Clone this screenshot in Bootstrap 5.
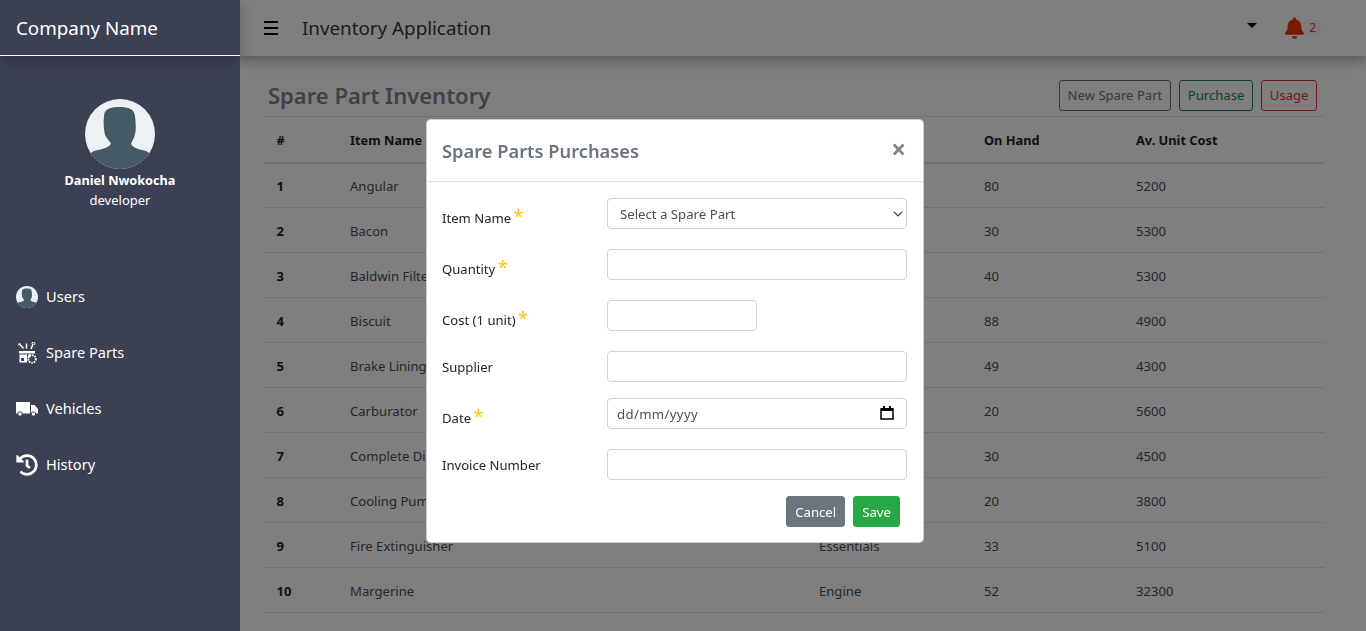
<!DOCTYPE html>
<html lang="en">
<head>
<meta charset="utf-8">
<title>Inventory Application</title>
<link href="https://cdn.jsdelivr.net/npm/bootstrap@5.3.0/dist/css/bootstrap.min.css" rel="stylesheet">
<style>
html,body{height:100%;overflow:hidden}
body{font-family:"Noto Sans","Open Sans",sans-serif;font-size:13.2px;color:#212529;background:#fff}
.shell{height:631px}
.side{width:240px;flex:none;background:#3c4053;color:#fff;z-index:1060;position:relative}
.brand{height:56px;border-bottom:1px solid #fff;font-size:18.8px;padding:2px 16px 0;box-shadow:0 4px 12px rgba(0,0,0,.25)}
.avatar{width:70px;height:70px;display:block;margin:43px auto 0}
.uname{font-weight:700;font-size:12.7px;margin-top:1px;line-height:20px}
.urole{line-height:20px;font-size:13px}
.menu{margin-top:59px}
.menu a{color:#fff;height:56px;padding:0 16px;font-size:14.6px;gap:8px;text-decoration:none}
.menu svg{width:22px;height:22px;flex:none}
.topbar{height:56px;padding:0 45px 0 24px;box-shadow:0 4px 12px rgba(0,0,0,.35);background:#fff}
.apptitle{font-size:18.8px;margin-left:24px;color:#343a40}
.burger{width:14px;height:14px}
.caret{width:0;height:0;border:5px solid transparent;border-top-color:#000;border-bottom:0;margin-right:28px;margin-top:-6px}
.bell{width:19px;height:22px}
.bellnum{background:#f8f9fa;color:#dc3545;font-size:12px;padding:1px 5px;border-radius:4px;line-height:14px}
.work{padding:24px 41px 0 24px}
.pagetitle{font-size:22px;font-weight:600;color:#7d858c;margin:0 0 0 4px;line-height:31px}
.tools{gap:8px;margin-right:8px}
.tools .btn{font-size:13.1px;padding:0 7.5px;height:31px;line-height:29px;border-radius:3px}
.tools .btn-outline-success{padding:0 8px}
.tools .btn-outline-secondary{margin-left:-1px}
.grid{table-layout:fixed;width:1061px;margin:5px 0 0;border-top:1px solid #dee2e6}
.grid th,.grid td{padding:4px 0 0 12.5px;height:45px;vertical-align:middle;font-size:13.1px;color:#495057;border-bottom:1px solid #dee2e6;box-shadow:none}
.grid thead th{border-bottom:2px solid #dee2e6;height:46px;padding-top:2px;font-weight:700;font-size:12.8px;color:#212529}
.grid tbody td:first-child{font-weight:700;color:#212529}
.veil{position:fixed;inset:0;background:rgba(0,0,0,.5);z-index:1050}
.dialog{position:fixed;left:426px;top:119px;width:498px;z-index:1055;border-radius:5px;border:1px solid rgba(0,0,0,.2);background:#fff}
.dialog .modal-header{height:62px;padding:1px 16px 0 15px;border-bottom:1px solid #dee2e6}
.dlgtitle{font-size:18.3px;font-weight:600;color:#6c757d;margin:0}
.shut{background:none;border:0;color:#7f868c;font-size:26px;line-height:1;padding:0 0 4px;font-weight:700;margin-right:1px}
.dialog .modal-body{padding:16px 16px 15px 15px}
.frow{margin-bottom:16px;display:flex;align-items:flex-start}
.frow.req{height:35px}
.frow label{width:165px;flex:none;padding-top:7px;font-size:13.1px;line-height:18px}
.frow.req label{padding-top:11px}
.star{color:#ffc107;font-size:18px;line-height:10px;margin-left:-1px;vertical-align:0}
.field{height:31px;width:300px;font-size:13.2px;color:#495057;border:1px solid #ced4da;border-radius:4px;padding:1px 12px 0;box-shadow:none;background-color:#fff}
.field.short{width:150px}
select.field{padding-top:2px;background-position:right 2px center;background-size:12px 10px}
.dateholder{width:300px;position:relative}
.dateholder .field{padding-left:9px;letter-spacing:.35px}
.dateholder .field::placeholder{color:#495057;opacity:1}
.dateholder svg{position:absolute;right:13px;top:8px;width:14px;height:14px}
.acts{gap:8px;margin:0 7px 0 0}
.acts .btn{font-size:13.2px;height:31px;padding:0 8px;line-height:31px;border-radius:3px}
.btn-save{background:#28a745;border-color:#28a745;color:#fff}
</style>
</head>
<body>
<div class="d-flex shell">
  <aside class="side">
    <div class="brand d-flex align-items-center">Company Name</div>
    <svg class="avatar" viewBox="0 0 70 70"><defs><clipPath id="av"><circle cx="35" cy="35" r="35"/></clipPath></defs><circle cx="35" cy="35" r="35" fill="#eef1f4"/><path clip-path="url(#av)" fill="#455a64" d="M19 17c0-8 8-9 16-9s15 2 15 10c1 7 1 14 0 17-1 5-3 7-4 10 2 4 7 5 15 7 2 1 3 2 4 3v15H5V55c1-1 2-2 4-3 8-2 14-3 17-7-1-3-4-5-6-9-1-5-2-12-1-19z"/></svg>
    <div class="uname text-center">Daniel Nwokocha</div>
    <div class="urole text-center">developer</div>
    <nav class="menu d-flex flex-column">
      <a class="d-flex align-items-center" href="#"><svg viewBox="0 0 70 70"><defs><clipPath id="av2"><circle cx="35" cy="35" r="35"/></clipPath></defs><circle cx="35" cy="35" r="35" fill="#eef1f4"/><path clip-path="url(#av2)" fill="#455a64" d="M19 17c0-8 8-9 16-9s15 2 15 10c1 7 1 14 0 17-1 5-3 7-4 10 2 4 7 5 15 7 2 1 3 2 4 3v15H5V55c1-1 2-2 4-3 8-2 14-3 17-7-1-3-4-5-6-9-1-5-2-12-1-19z"/></svg>Users</a>
      <a class="d-flex align-items-center" href="#"><svg viewBox="0 0 22 22"><path fill="#fff" d="M3 9h16v2.500H3zM3.500 12.500h7.500v8H3.500zM12 12.500h3.500l-1 2-2.500 2z"/><path fill="#3c4053" d="M5 16h3v3H5z"/><circle cx="16" cy="17" r="3.800" fill="none" stroke="#fff" stroke-width="2" stroke-dasharray="1.500 1"/><path stroke="#fff" stroke-width="1.500" fill="none" d="M3 1.500l4.500 5M10.500 1.500v5M17 2l-2 5"/><path stroke="#fff" fill="none" d="M2 3.500l2-2M16 2a1.500 1.500 0 1 1 2 1"/></svg>Spare Parts</a>
      <a class="d-flex align-items-center" href="#"><svg viewBox="0 0 22 22"><path fill="#fff" d="M0 4h14v11.500H0zM15 7h3.500l3.500 4v4.500h-7z"/><circle cx="4" cy="16" r="2.200" fill="#fff" stroke="#3c4053"/><circle cx="17.500" cy="16" r="2.200" fill="#fff" stroke="#3c4053"/></svg>Vehicles</a>
      <a class="d-flex align-items-center" href="#"><svg viewBox="0 0 512 512"><path fill="#fff" d="M504 255.531c.253 136.64-111.18 248.372-247.82 248.468-59.015.042-113.223-20.53-155.822-54.911-11.077-8.94-11.905-25.541-1.839-35.607l11.267-11.267c8.609-8.609 22.353-9.551 31.891-1.984C173.062 425.135 212.781 440 256 440c101.705 0 184-82.311 184-184 0-101.705-82.311-184-184-184-48.814 0-93.149 18.969-126.068 49.932l50.754 50.754c10.08 10.08 2.941 27.314-11.313 27.314H24c-8.837 0-16-7.163-16-16V38.627c0-14.254 17.234-21.393 27.314-11.314l49.372 49.372C129.209 34.136 189.552 8 256 8c136.81 0 247.747 110.78 248 247.531zm-180.912 78.784l9.823-12.63c8.138-10.463 6.253-25.542-4.21-33.679L288 256.349V152c0-13.255-10.745-24-24-24h-16c-13.255 0-24 10.745-24 24v135.651l65.409 50.874c10.463 8.137 25.541 6.253 33.679-4.21z"/></svg>History</a>
    </nav>
  </aside>
  <div class="flex-grow-1">
    <header class="topbar d-flex align-items-center">
      <svg class="burger" viewBox="0 0 14 14"><path stroke="#000" stroke-width="2" d="M0 1h14M0 7h14M0 13h14"/></svg>
      <span class="apptitle">Inventory Application</span>
      <span class="ms-auto caret"></span>
      <svg class="bell" viewBox="0 0 448 512"><path fill="#f53100" d="M224 512c35.320 0 63.970-28.650 63.970-64H160.030c0 35.350 28.650 64 63.970 64zm215.390-149.710c-19.320-20.760-55.470-51.990-55.470-154.290 0-77.700-54.480-139.900-127.940-155.160V32c0-17.670-14.320-32-31.980-32s-31.980 14.330-31.980 32v20.840C118.560 68.100 64.080 130.300 64.080 208c0 102.300-36.150 133.530-55.470 154.290-6 6.450-8.660 14.160-8.610 21.710.11 16.400 12.980 32 32.100 32h383.800c19.120 0 32-15.600 32.100-32 .05-7.550-2.610-15.270-8.610-21.710z"/></svg>
      <span class="bellnum">2</span>
    </header>
    <main class="work">
      <div class="d-flex justify-content-between align-items-center">
        <h3 class="pagetitle">Spare Part Inventory</h3>
        <div class="d-flex tools">
          <button class="btn btn-outline-secondary">New Spare Part</button>
          <button class="btn btn-outline-success">Purchase</button>
          <button class="btn btn-outline-danger">Usage</button>
        </div>
      </div>
      <table class="grid">
        <colgroup><col style="width:73.500px"><col style="width:469px"><col style="width:165px"><col style="width:152px"><col></colgroup>
        <thead><tr><th>#</th><th>Item Name</th><th>Category</th><th>On Hand</th><th>Av. Unit Cost</th></tr></thead>
        <tbody>
          <tr><td>1</td><td>Angular</td><td>Engine</td><td>80</td><td>5200</td></tr>
          <tr><td>2</td><td>Bacon</td><td>Engine</td><td>30</td><td>5300</td></tr>
          <tr><td>3</td><td>Baldwin Filter</td><td>Engine</td><td>40</td><td>5300</td></tr>
          <tr><td>4</td><td>Biscuit</td><td>Engine</td><td>88</td><td>4900</td></tr>
          <tr><td>5</td><td>Brake Lining</td><td>Engine</td><td>49</td><td>4300</td></tr>
          <tr><td>6</td><td>Carburator</td><td>Engine</td><td>20</td><td>5600</td></tr>
          <tr><td>7</td><td>Complete Disc</td><td>Engine</td><td>30</td><td>4500</td></tr>
          <tr><td>8</td><td>Cooling Pump</td><td>Engine</td><td>20</td><td>3800</td></tr>
          <tr><td>9</td><td>Fire Extinguisher</td><td>Essentials</td><td>33</td><td>5100</td></tr>
          <tr><td>10</td><td>Margerine</td><td>Engine</td><td>52</td><td>32300</td></tr>
        </tbody>
      </table>
    </main>
  </div>
</div>
<div class="veil"></div>
<div class="dialog modal-content">
  <div class="modal-header">
    <h5 class="dlgtitle">Spare Parts Purchases</h5>
    <button class="shut ms-auto" type="button">&times;</button>
  </div>
  <div class="modal-body">
    <div class="frow req"><label>Item Name <span class="star">*</span></label><select class="form-select field"><option>Select a Spare Part</option></select></div>
    <div class="frow req"><label>Quantity <span class="star">*</span></label><input class="form-control field" type="text"></div>
    <div class="frow req"><label>Cost (1 unit) <span class="star">*</span></label><input class="form-control field short" type="text"></div>
    <div class="frow"><label>Supplier</label><input class="form-control field" type="text"></div>
    <div class="frow req"><label>Date <span class="star">*</span></label><div class="dateholder"><input class="form-control field" type="text" placeholder="dd/mm/yyyy"><svg viewBox="0 0 14 14"><path fill="none" stroke="#000" stroke-width="1.500" d="M1 3h12v10H1z"/><path fill="#000" d="M1 2h12v3H1zM3 0h2v2H3zM9 0h2v2H9z"/></svg></div></div>
    <div class="frow"><label>Invoice Number</label><input class="form-control field" type="text"></div>
    <div class="d-flex justify-content-end acts">
      <button class="btn btn-secondary">Cancel</button>
      <button class="btn btn-save">Save</button>
    </div>
  </div>
</div>
</body>
</html>
